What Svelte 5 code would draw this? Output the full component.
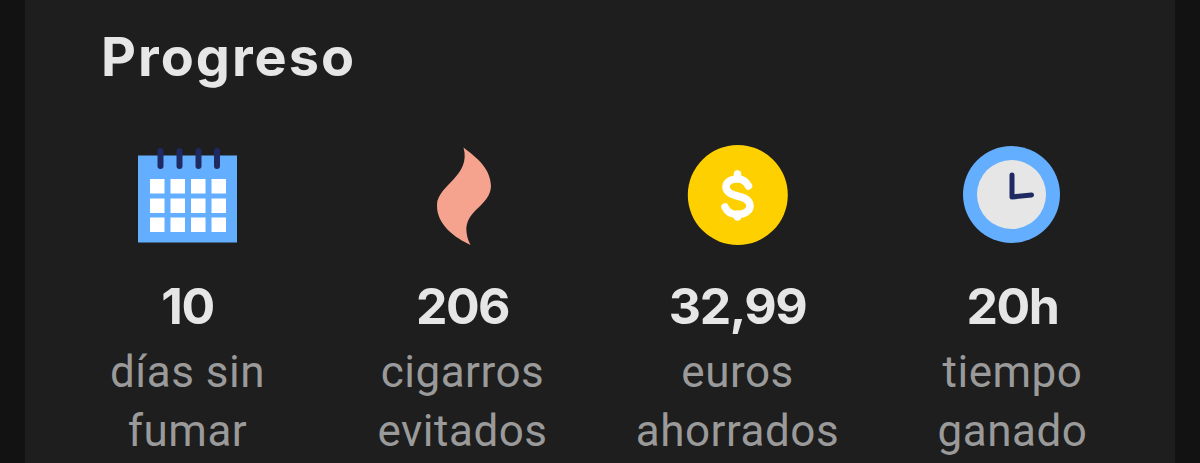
<script>
  const stats = [
    { id: "calendar", value: "10", label: ["días sin", "fumar"] },
    { id: "flame", value: "206", label: ["cigarros", "evitados"] },
    { id: "coin", value: "32,99", label: ["euros", "ahorrados"] },
    { id: "clock", value: "20h", label: ["tiempo", "ganado"] }
  ];

  const cellX = [149.5, 170, 190.5, 211];
  const cellY = [179, 198.5, 217.5];
  const ringX = [160, 179, 198, 216.5];
</script>

<main>
  <section class="card">
    <h1>Progreso</h1>
    <div class="stats">
      {#each stats as stat}
        <article class="stat">
          {#if stat.id === "calendar"}
            <svg viewBox="122.5 135 130 120" width="130" height="120" aria-hidden="true">
              <rect x="137.5" y="155.5" width="99" height="87" fill="#64aeff" />
              {#each ringX as x}
                <line x1={x} x2={x} y1="151" y2="166" stroke="#1f2a63" stroke-width="6" stroke-linecap="round" />
              {/each}
              {#each cellY as y}
                {#each cellX as x}
                  <rect {x} {y} width="14.5" height="14.5" fill="#fff" />
                {/each}
              {/each}
            </svg>
          {:else if stat.id === "flame"}
            <svg viewBox="397.5 135 130 120" width="130" height="120" aria-hidden="true">
              <path
                d="M463 147.500 C472 155 490 166 490.500 186 C490 206 464 210 466 232 C466.500 237 468 241 470 245 C455 238 436 225 436.500 205 C437 185 471 176 463 147.500Z"
                fill="#f5a28f"
              />
            </svg>
          {:else if stat.id === "coin"}
            <svg viewBox="672.5 135 130 120" width="130" height="120" aria-hidden="true">
              <circle cx="737.3" cy="195" r="50" fill="#ffd000" />
              <path
                d="M748 186 C745.500 181 741.500 179 737 179 C730.500 179 725.500 182 725.500 187 C725.500 192.500 731 194.500 737 196 C744 197.500 749.500 200 749.500 206 C749.500 211 744 214.500 737 214.500 C731 214.500 726.500 211.500 724.500 207 M737 174 V179 M737 214 V217"
                fill="none"
                stroke="#fff"
                stroke-width="7.500"
                stroke-linecap="round"
              />
            </svg>
          {:else}
            <svg viewBox="947.5 135 130 120" width="130" height="120" aria-hidden="true">
              <circle cx="1011" cy="194.500" r="48.500" fill="#64aeff" />
              <circle cx="1011" cy="194.500" r="34.500" fill="#e6e6e6" />
              <path
                d="M1011.500 175 V197 L1031 195"
                fill="none"
                stroke="#1f2a63"
                stroke-width="5"
                stroke-linecap="round"
                stroke-linejoin="round"
              />
            </svg>
          {/if}
          <strong>{stat.value}</strong>
          {#each stat.label as line}
            <span>{line}</span>
          {/each}
        </article>
      {/each}
    </div>
  </section>
</main>

<style>
  :global(body) {
    margin: 0;
    background: #121212;
  }

  main {
    height: 463px;
    overflow: hidden;
    padding: 0 25px;
    font-family: Roboto, sans-serif;
  }

  .card {
    height: 100%;
    padding: 0 25px;
    box-sizing: border-box;
    background: #1e1e1e;
  }

  h1 {
    margin: 0 0 0 51px;
    padding-top: 24px;
    height: 135px;
    box-sizing: border-box;
    font-family: Inter, sans-serif;
    font-size: 54px;
    font-weight: 700;
    letter-spacing: 2px;
    line-height: 66px;
    color: #e6e6e6;
  }

  .stats {
    display: grid;
    grid-template-columns: repeat(4, 275px);
  }

  .stat {
    display: flex;
    flex-direction: column;
    align-items: center;
  }

  svg {
    display: block;
  }

  strong {
    margin: 21px 0 7px;
    font-family: Inter, sans-serif;
    font-size: 50px;
    font-weight: 700;
    letter-spacing: -1.5px;
    line-height: 60px;
    color: #e6e6e6;
  }

  span {
    font-size: 44px;
    line-height: 59px;
    letter-spacing: 0.5px;
    color: #9a9a9a;
  }
</style>
